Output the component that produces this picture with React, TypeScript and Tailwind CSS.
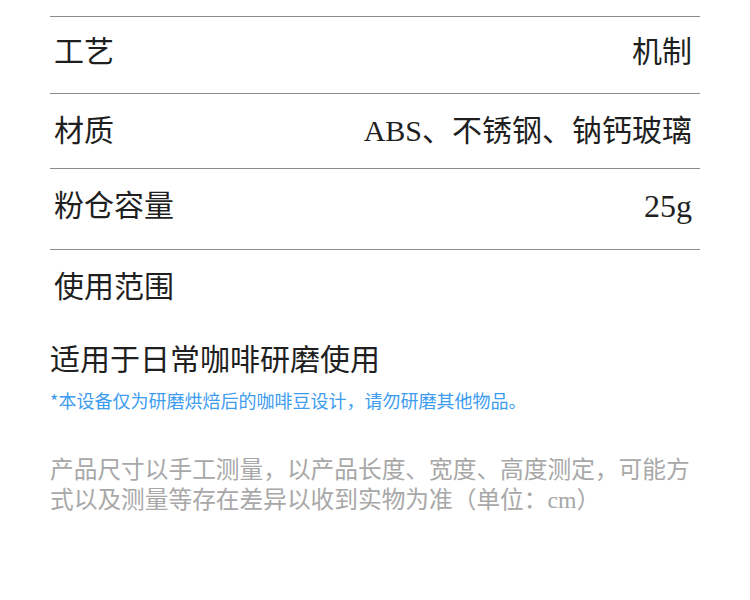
import React from "react";

const font = { fontFamily: '"Liberation Serif", "Noto Sans CJK SC", serif' };

function Row({ label, value, h }: { label: string; value: string; h: string }) {
  return (
    <div className={`flex items-center justify-between border-b border-[#8c8c8c] pl-[4px] pr-[8px] ${h}`}>
      <span className="text-[30px] leading-none text-[#1f1f1f]">{label}</span>
      <span className="text-[30px] leading-none text-[#1f1f1f]">{value}</span>
    </div>
  );
}

export default function App() {
  return (
    <div className="w-[750px] h-[600px] bg-white pt-[16px]" style={font}>
      <div className="ml-[50px] w-[650px]">
        <div className="border-t border-[#8c8c8c]">
          <div className="flex items-center justify-between border-b border-[#8c8c8c] pl-[4px] pr-[8px] h-[77px] pb-[6px]">
            <span className="text-[30px] leading-none text-[#1f1f1f]">工艺</span>
            <span className="text-[30px] leading-none text-[#1f1f1f]">机制</span>
          </div>
          <Row label="材质" value="ABS、不锈钢、钠钙玻璃" h="h-[75px]" />
          <div className="flex items-center justify-between border-b border-[#8c8c8c] pl-[4px] pr-[8px] h-[81px] pb-[6px]">
            <span className="text-[30px] leading-none text-[#1f1f1f]">粉仓容量</span>
            <span className="text-[30px] leading-none text-[#1f1f1f]">
              <span className="text-[32px]">25g</span>
            </span>
          </div>
        </div>
        <div className="mt-[22px] pl-[4px] text-[30px] leading-[30px] text-[#1f1f1f]">使用范围</div>
        <div className="mt-[43px] text-[30px] leading-[30px] text-[#1f1f1f]">适用于日常咖啡研磨使用</div>
        <div
          className="mt-[15px] text-[18px] leading-[20px] text-[#3d9cf0] whitespace-nowrap"
          style={{ fontFamily: '"Noto Sans CJK SC", sans-serif' }}
        >
          *本设备仅为研磨烘焙后的咖啡豆设计，请勿研磨其他物品。
        </div>
        <div className="mt-[45px] text-[23.7px] leading-[30px] text-[#a8a8a8] whitespace-nowrap">
          <div>产品尺寸以手工测量，以产品长度、宽度、高度测定，可能方</div>
          <div>式以及测量等存在差异以收到实物为准（单位：cm）</div>
        </div>
      </div>
    </div>
  );
}
